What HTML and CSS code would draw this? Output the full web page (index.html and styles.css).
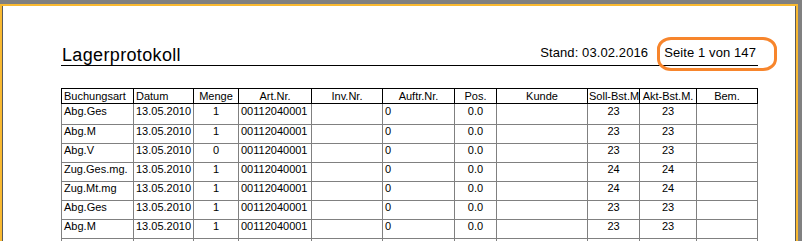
FILE: index.html
```html
<!DOCTYPE html>
<html lang="de">
<head>
<meta charset="utf-8">
<title>Lagerprotokoll</title>
<link rel="stylesheet" href="styles.css">
</head>
<body>
<div class="frame">
  <div class="page">
    <div class="report-head">
      <h1 class="title">Lagerprotokoll</h1>
      <div class="meta">
        <span class="stand">Stand: 03.02.2016</span>
        <span class="pageno">Seite 1 von 147</span>
      </div>
      <div class="highlight"></div>
    </div>
    <table class="log">
      <colgroup>
        <col class="c1"><col class="c2"><col class="c3"><col class="c4"><col class="c5"><col class="c6">
        <col class="c7"><col class="c8"><col class="c9"><col class="c10"><col class="c11">
      </colgroup>
      <thead>
        <tr>
          <th class="l">Buchungsart</th><th class="l">Datum</th><th>Menge</th><th>Art.Nr.</th><th>Inv.Nr.</th><th>Auftr.Nr.</th><th>Pos.</th><th>Kunde</th><th>Soll-Bst.M</th><th>Akt-Bst.M.</th><th>Bem.</th>
        </tr>
      </thead>
      <tbody>
        <tr class="first"><td>Abg.Ges</td><td>13.05.2010</td><td class="c">1</td><td>00112040001</td><td></td><td>0</td><td class="c">0.0</td><td></td><td class="c">23</td><td class="c">23</td><td></td></tr>
        <tr><td>Abg.M</td><td>13.05.2010</td><td class="c">1</td><td>00112040001</td><td></td><td>0</td><td class="c">0.0</td><td></td><td class="c">23</td><td class="c">23</td><td></td></tr>
        <tr><td>Abg.V</td><td>13.05.2010</td><td class="c">0</td><td>00112040001</td><td></td><td>0</td><td class="c">0.0</td><td></td><td class="c">23</td><td class="c">23</td><td></td></tr>
        <tr><td>Zug.Ges.mg.</td><td>13.05.2010</td><td class="c">1</td><td>00112040001</td><td></td><td>0</td><td class="c">0.0</td><td></td><td class="c">24</td><td class="c">24</td><td></td></tr>
        <tr><td>Zug.Mt.mg</td><td>13.05.2010</td><td class="c">1</td><td>00112040001</td><td></td><td>0</td><td class="c">0.0</td><td></td><td class="c">24</td><td class="c">24</td><td></td></tr>
        <tr><td>Abg.Ges</td><td>13.05.2010</td><td class="c">1</td><td>00112040001</td><td></td><td>0</td><td class="c">0.0</td><td></td><td class="c">23</td><td class="c">23</td><td></td></tr>
        <tr><td>Abg.M</td><td>13.05.2010</td><td class="c">1</td><td>00112040001</td><td></td><td>0</td><td class="c">0.0</td><td></td><td class="c">23</td><td class="c">23</td><td></td></tr>
        <tr><td>Abg.V</td><td>13.05.2010</td><td class="c">0</td><td>00112040001</td><td></td><td>0</td><td class="c">0.0</td><td></td><td class="c">23</td><td class="c">23</td><td></td></tr>
        <tr><td>Zug.Ges.mg.</td><td>13.05.2010</td><td class="c">1</td><td>00112040001</td><td></td><td>0</td><td class="c">0.0</td><td></td><td class="c">24</td><td class="c">24</td><td></td></tr>
      </tbody>
    </table>
  </div>
</div>
</body>
</html>
```
FILE: styles.css
```css
html, body {
  margin: 0;
  padding: 0;
  height: 100%;
  overflow: hidden;
}
body {
  background: #808080;
  font-family: "Liberation Sans", Arial, sans-serif;
  color: #000;
}
.frame {
  margin: 4px 4px 0 0;
  border: 2px solid #f9b931;
  border-bottom: none;
  height: calc(100% - 6px);
}
.page {
  background: #fff;
  border-left: 1px solid #5a5a5a;
  border-right: 1px solid #5a5a5a;
  height: 100%;
  overflow: hidden;
}
.report-head {
  position: relative;
  margin: 39px 0 0 58px;
  width: 697px;
  display: flex;
  justify-content: space-between;
  align-items: flex-end;
  border-bottom: 1px solid #000;
}
.title {
  margin: 0;
  font-weight: normal;
  font-size: 18px;
  line-height: 20px;
  letter-spacing: 0.35px;
  padding-left: 1px;
}
.meta {
  display: flex;
  gap: 16px;
  font-size: 13px;
  line-height: 15px;
  margin-bottom: 5px;
  padding-right: 2px;
  letter-spacing: 0.1px;
}
.highlight {
  position: absolute;
  left: 596px;
  top: -8px;
  width: 114px;
  height: 28px;
  border: 3px solid #f7852c;
  border-radius: 14px / 12px;
}
.log {
  margin: 22px 0 0 58px;
  width: 697px;
  table-layout: fixed;
  border-collapse: collapse;
  font-size: 11px;
}
.c1 { width: 72px; }
.c2 { width: 60px; }
.c3 { width: 45px; }
.c4 { width: 73px; }
.c5 { width: 71px; }
.c6 { width: 72px; }
.c7 { width: 42px; }
.c8 { width: 91px; }
.c9 { width: 52px; }
.c10 { width: 57px; }
.c11 { width: 61px; }
.log th {
  border: 1px solid #000;
  font-weight: normal;
  text-align: center;
  height: 14px;
  padding: 0 1px;
  line-height: 14px;
  white-space: nowrap;
  overflow: hidden;
}
.log th.l {
  text-align: left;
  padding-left: 2px;
}
.log td {
  border: 1px solid #808080;
  height: 18px;
  padding: 0 2px;
  vertical-align: top;
  line-height: 13px;
  white-space: nowrap;
  overflow: hidden;
}
.log tr.first td {
  height: 19px;
  padding-top: 1px;
}
.log td.c {
  text-align: center;
}
```
